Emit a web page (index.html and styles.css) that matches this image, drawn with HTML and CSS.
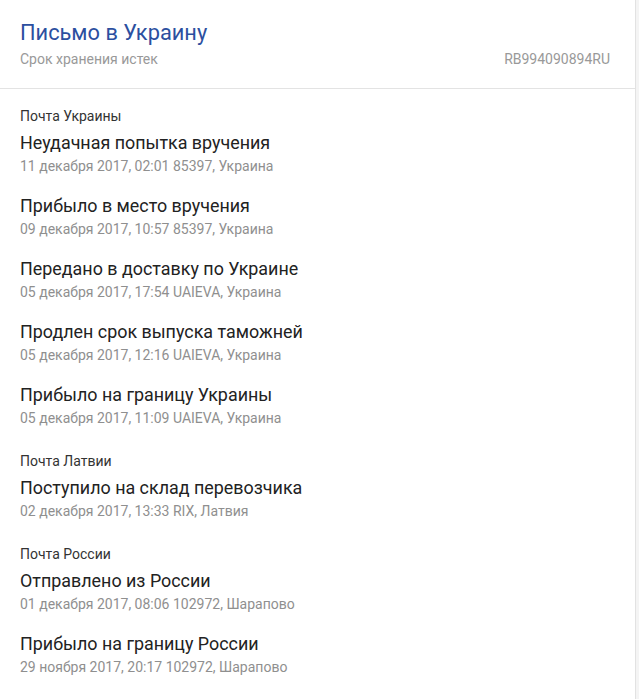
FILE: index.html
```html
<!DOCTYPE html>
<html lang="ru">
<head>
<meta charset="utf-8">
<link rel="stylesheet" href="styles.css">
</head>
<body>
<div class="page">
  <div class="card">
    <header class="head">
      <h1 class="title">Письмо в Украину</h1>
      <div class="sub">
        <span class="status">Срок хранения истек</span>
        <span class="track">RB994090894RU</span>
      </div>
    </header>
    <main class="list">
      <section class="group">
        <div class="carrier">Почта Украины</div>
        <div class="event"><div class="ev-title">Неудачная попытка вручения</div><div class="ev-meta">11 декабря 2017, 02:01 85397, Украина</div></div>
        <div class="event"><div class="ev-title">Прибыло в место вручения</div><div class="ev-meta">09 декабря 2017, 10:57 85397, Украина</div></div>
        <div class="event"><div class="ev-title">Передано в доставку по Украине</div><div class="ev-meta">05 декабря 2017, 17:54 UAIEVA, Украина</div></div>
        <div class="event"><div class="ev-title">Продлен срок выпуска таможней</div><div class="ev-meta">05 декабря 2017, 12:16 UAIEVA, Украина</div></div>
        <div class="event"><div class="ev-title">Прибыло на границу Украины</div><div class="ev-meta">05 декабря 2017, 11:09 UAIEVA, Украина</div></div>
      </section>
      <section class="group">
        <div class="carrier">Почта Латвии</div>
        <div class="event"><div class="ev-title">Поступило на склад перевозчика</div><div class="ev-meta">02 декабря 2017, 13:33 RIX, Латвия</div></div>
      </section>
      <section class="group">
        <div class="carrier">Почта России</div>
        <div class="event"><div class="ev-title">Отправлено из России</div><div class="ev-meta">01 декабря 2017, 08:06 102972, Шарапово</div></div>
        <div class="event"><div class="ev-title">Прибыло на границу России</div><div class="ev-meta">29 ноября 2017, 20:17 102972, Шарапово</div></div>
      </section>
    </main>
  </div>
</div>
</body>
</html>
```

FILE: styles.css
```css
html, body {
  margin: 0;
  padding: 0;
  background: #f4f4f4;
}
body {
  font-family: Roboto, "Noto Sans", "Liberation Sans", sans-serif;
  -webkit-font-smoothing: antialiased;
}
.page {
  display: flex;
  height: 699px;
  overflow: hidden;
}
.card {
  width: 635px;
  background: #fff;
  border-right: 1px solid #e2e2e2;
  min-height: 699px;
}
.head {
  padding: 20px 25px 21px 20px;
  border-bottom: 1px solid #e3e3e3;
}
.title {
  margin: 0;
  font-size: 21.8px;
  line-height: 26px;
  font-weight: 400;
  color: #2c4f9f;
}
.sub {
  margin-top: 5px;
  display: flex;
  justify-content: space-between;
  font-size: 14px;
  line-height: 16px;
  color: #999;
}
.list {
  padding: 19px 20px 0 20px;
}
.group + .group {
  margin-top: 27px;
}
.carrier {
  font-size: 14px;
  line-height: 16px;
  color: #333;
  margin-bottom: 9px;
}
.event {
  margin-bottom: 22px;
}
.ev-title {
  font-size: 17.9px;
  line-height: 20px;
  color: #222;
}
.ev-meta {
  margin-top: 5px;
  font-size: 14px;
  line-height: 16px;
  color: #8f8f8f;
  font-weight: 400;
}
```
